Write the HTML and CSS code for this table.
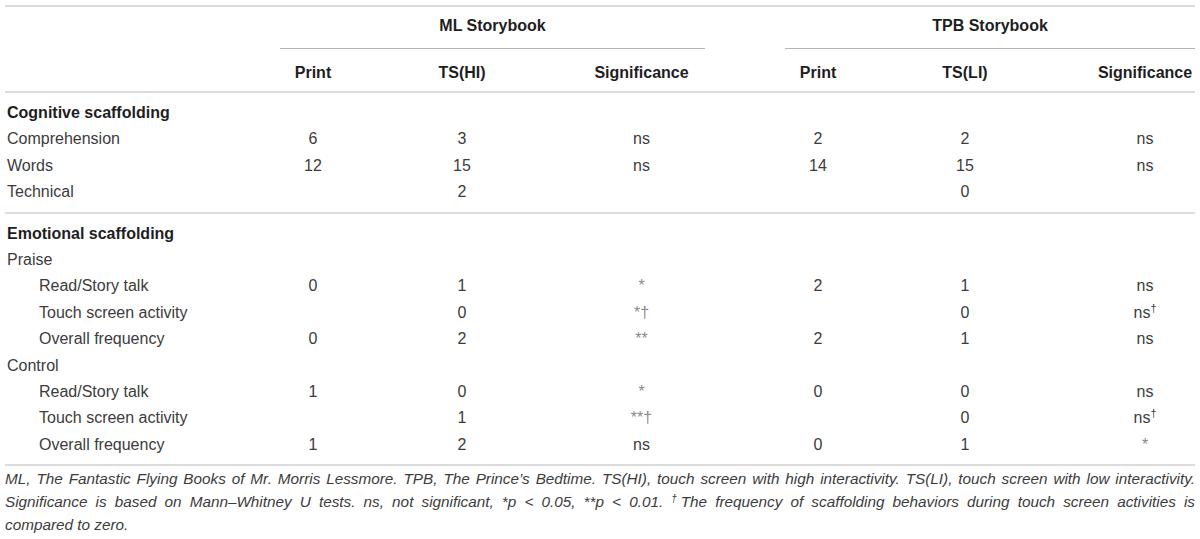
FILE: index.html
```html
<!DOCTYPE html>
<html>
<head>
<meta charset="utf-8">
<link rel="stylesheet" href="styles.css">
</head>
<body>
<div class="wrap">
<table class="tbl">
  <colgroup>
    <col class="c-label">
    <col class="c-print">
    <col class="c-ts">
    <col class="c-sig">
    <col class="c-gap">
    <col class="c-print">
    <col class="c-ts2">
    <col class="c-sig2">
  </colgroup>
  <thead>
    <tr class="hdr1">
      <th></th>
      <th colspan="3" class="group">ML Storybook</th>
      <th></th>
      <th colspan="3" class="group">TPB Storybook</th>
    </tr>
    <tr class="hdr2">
      <th></th>
      <th>Print</th>
      <th>TS(HI)</th>
      <th>Significance</th>
      <th></th>
      <th>Print</th>
      <th>TS(LI)</th>
      <th class="last">Significance</th>
    </tr>
  </thead>
  <tbody>
    <tr class="first"><td class="section" colspan="8">Cognitive scaffolding</td></tr>
    <tr><td>Comprehension</td><td>6</td><td>3</td><td>ns</td><td></td><td>2</td><td>2</td><td class="last">ns</td></tr>
    <tr><td>Words</td><td>12</td><td>15</td><td>ns</td><td></td><td>14</td><td>15</td><td class="last">ns</td></tr>
    <tr class="end"><td>Technical</td><td></td><td>2</td><td></td><td></td><td></td><td>0</td><td class="last"></td></tr>
  </tbody>
  <tbody>
    <tr class="first"><td class="section" colspan="8">Emotional scaffolding</td></tr>
    <tr><td>Praise</td><td></td><td></td><td></td><td></td><td></td><td></td><td class="last"></td></tr>
    <tr><td class="ind">Read/Story talk</td><td>0</td><td>1</td><td class="ast">*</td><td></td><td>2</td><td>1</td><td class="last">ns</td></tr>
    <tr><td class="ind">Touch screen activity</td><td></td><td>0</td><td class="ast">*&dagger;</td><td></td><td></td><td>0</td><td class="last">ns<sup>&dagger;</sup></td></tr>
    <tr><td class="ind">Overall frequency</td><td>0</td><td>2</td><td class="ast">**</td><td></td><td>2</td><td>1</td><td class="last">ns</td></tr>
    <tr><td>Control</td><td></td><td></td><td></td><td></td><td></td><td></td><td class="last"></td></tr>
    <tr><td class="ind">Read/Story talk</td><td>1</td><td>0</td><td class="ast">*</td><td></td><td>0</td><td>0</td><td class="last">ns</td></tr>
    <tr><td class="ind">Touch screen activity</td><td></td><td>1</td><td class="ast">**&dagger;</td><td></td><td></td><td>0</td><td class="last">ns<sup>&dagger;</sup></td></tr>
    <tr class="end"><td class="ind">Overall frequency</td><td>1</td><td>2</td><td>ns</td><td></td><td>0</td><td>1</td><td class="last ast">*</td></tr>
  </tbody>
</table>
<div class="note"><span>ML, The Fantastic Flying Books of Mr. Morris Lessmore. TPB, The Prince&rsquo;s Bedtime. TS(HI), touch screen with high interactivity. TS(LI), touch screen with low interactivity. Significance is based on Mann&ndash;Whitney U tests. ns, not significant, *p &lt; 0.05, **p &lt; 0.01. <sup class="fn">&dagger;</sup>The frequency of scaffolding behaviors during touch screen activities is</span><span class="note-end">compared to zero.</span></div>
</div>
</body>
</html>
```

FILE: styles.css
```css
html, body {
  margin: 0;
  padding: 0;
  background: #ffffff;
}
body {
  font-family: "Liberation Sans", Arial, sans-serif;
  font-size: 16px;
  color: #3c3c3c;
}
.wrap {
  padding: 5px 5px 0 5px;
}
.tbl {
  width: 1190px;
  border-collapse: collapse;
  table-layout: fixed;
  border-top: 2px solid #dcdcdc;
}
.c-label { width: 275px; }
.c-print { width: 66px; }
.c-ts { width: 232px; }
.c-sig { width: 127px; }
.c-gap { width: 80px; }
.c-ts2 { width: 228px; }
.c-sig2 { width: 116px; }

th {
  font-weight: bold;
  color: #1e1e1e;
  text-align: center;
  padding: 0;
  line-height: 18px;
}
.hdr1 th {
  padding-top: 10px;
  padding-bottom: 13px;
}
.hdr1 th.group {
  border-bottom: 1px solid #b4b4b4;
}
.hdr2 th {
  padding-top: 15px;
  padding-bottom: 9px;
  border-bottom: 2px solid #dcdcdc;
}
td {
  padding: 0;
  height: 26.4px;
  line-height: 26.4px;
  text-align: center;
  white-space: nowrap;
}
td:first-child {
  text-align: left;
  padding-left: 2px;
}
td.ind {
  padding-left: 34px;
}
td.section {
  font-weight: bold;
  color: #1e1e1e;
}
th.last, td.last {
  padding-left: 16px;
}
tr.first td {
  padding-top: 7px;
}
tr.end td {
  padding-bottom: 6px;
}
tbody {
  border-bottom: 2px solid #dcdcdc;
}
td.ast {
  color: #8a8a8a;
}
sup {
  font-size: 11px;
  line-height: 0;
  vertical-align: 6px;
}
sup.fn {
  font-size: 10px;
  vertical-align: 5px;
}
.note {
  margin: 0;
  padding: 1px 0 0 0;
  width: 1190px;
  font-style: italic;
  font-size: 15.3px;
  line-height: 23px;
  text-align: justify;
  text-align-last: justify;
  color: #3c3c3c;
}
.note-end {
  display: block;
  text-align: left;
  text-align-last: left;
}
```
